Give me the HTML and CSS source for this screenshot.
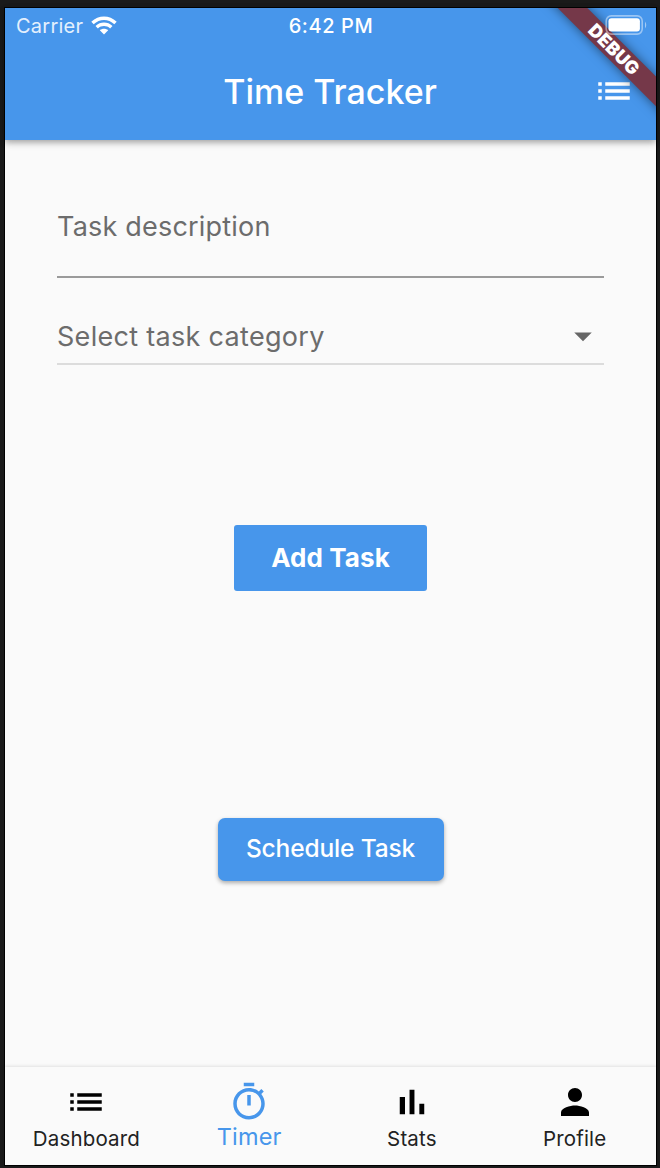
FILE: index.html
```html
<!DOCTYPE html>
<html lang="en">
<head>
<meta charset="utf-8">
<title>Time Tracker</title>
<link rel="stylesheet" href="styles.css">
</head>
<body>
<div class="phone">
  <header class="header">
    <div class="status">
      <div class="carrier"><span>Carrier</span>
        <svg class="wifi" viewBox="0 0 26 19"><path d="M0.3 5.8C7.5-1.3 18.500-1.300 25.700 5.800L23.300 8.200C17.400 2.500 8.600 2.500 2.700 8.200ZM4.500 10C9.300 5.400 16.700 5.400 21.500 10L19.100 12.400C15.600 9.200 10.400 9.200 6.900 12.400ZM8.800 14.300C11.200 12.300 14.800 12.300 17.200 14.300L13 18.600Z"/></svg>
      </div>
      <div class="clock">6:42 PM</div>
      <svg class="battery" viewBox="0 0 42 20"><rect class="shell" x="1.200" y=".9" width="36" height="18.200" rx="5"/><rect x="3.500" y="3.200" width="31.400" height="13.400" rx="3"/><path class="cap" d="M40 6.500Q42.500 10 40 13.500Z"/></svg>
    </div>
    <div class="toolbar">
      <h1 class="title">Time Tracker</h1>
      <svg class="icon" viewBox="0 0 24 24"><path d="M3 13h2v-2H3v2zm0 4h2v-2H3v2zm0-8h2V7H3v2zm4 4h14v-2H7v2zm0 4h14v-2H7v2zM7 7v2h14V7H7z"/></svg>
    </div>
    <div class="ribbon-clip"><div class="ribbon"><span>DEBUG</span></div></div>
  </header>
  <main class="content">
    <div class="field description"><span>Task description</span></div>
    <div class="field category"><span>Select task category</span>
      <svg class="icon" viewBox="0 0 24 24"><path d="M7 10l5 5 5-5z"/></svg>
    </div>
    <button class="add">Add Task</button>
    <button class="schedule">Schedule Task</button>
  </main>
  <nav class="nav">
    <div class="tab"><svg class="icon" viewBox="0 0 24 24"><path d="M3 13h2v-2H3v2zm0 4h2v-2H3v2zm0-8h2V7H3v2zm4 4h14v-2H7v2zm0 4h14v-2H7v2zM7 7v2h14V7H7z"/></svg><span class="dashboard">Dashboard</span></div>
    <div class="tab active"><svg class="icon" viewBox="0 0 24 24"><path d="M15 1H9v2h6V1zm-4 13h2V8h-2v6zm8.030-6.610l1.420-1.420c-.43-.51-.9-.99-1.410-1.410l-1.420 1.420C16.070 4.740 14.120 4 12 4c-4.970 0-9 4.030-9 9s4.020 9 9 9 9-4.030 9-9c0-2.120-.74-4.070-1.970-5.610zM12 20c-3.870 0-7-3.130-7-7s3.130-7 7-7 7 3.130 7 7-3.130 7-7 7z"/></svg><span>Timer</span></div>
    <div class="tab"><svg class="icon" viewBox="0 0 24 24"><path d="M5 9.200h3V19H5zM10.600 5h2.800v14h-2.800zm5.600 8H19v6h-2.800z"/></svg><span class="stats">Stats</span></div>
    <div class="tab"><svg class="icon" viewBox="0 0 24 24"><path d="M12 12c2.210 0 4-1.790 4-4s-1.790-4-4-4-4 1.790-4 4 1.790 4 4 4zm0 2c-2.670 0-8 1.340-8 4v2h16v-2c0-2.660-5.330-4-8-4z"/></svg><span class="profile">Profile</span></div>
  </nav>
</div>
</body>
</html>
```
FILE: styles.css
```css
* { box-sizing: border-box; }
body {
  margin: 0;
  height: 1168px;
  padding: 8px 4px 3px 5px;
  background: #1a1a1a;
  font-family: Inter, "Liberation Sans", sans-serif;
  overflow: hidden;
}
.phone {
  width: 651px;
  height: 1157px;
  display: flex;
  flex-direction: column;
  background: #fafafa;
  box-shadow: 0 0 0 1px #000;
}
.icon { width: 42px; height: 42px; fill: currentColor; display: block; flex: none; }
.header {
  position: relative;
  height: 132px;
  flex: none;
  background: #4796eb;
  color: #fff;
  box-shadow: 0 2px 6px rgba(0,0,0,.26), 0 3px 8px rgba(0,0,0,.14);
}
.status {
  position: relative;
  z-index: 2;
  height: 35px;
  display: grid;
  grid-template-columns: 1fr auto 1fr;
  align-items: center;
  padding: 0 10px 0 11px;
  font-size: 20px;
}
.carrier { display: flex; align-items: center; gap: 8px; letter-spacing: .25px; color: #e4f0fd; }
.wifi { width: 26px; height: 19px; fill: #fff; }
.clock { font-weight: 500; letter-spacing: .6px; }
.battery { width: 42px; height: 20px; justify-self: end; margin: -1px -1px 0 0; fill: #fff; }
.shell { fill: none; stroke: #fff; stroke-opacity: .45; stroke-width: 1.600; }
.cap { fill-opacity: .5; }
.toolbar {
  height: 97px;
  display: grid;
  grid-template-columns: 42px 1fr 42px;
  align-items: center;
  padding: 0 21px 0 20px;
  margin-top: -1px;
}
.title { grid-column: 2; margin: 0; padding-top: 2px; text-align: center; font-size: 34px; font-weight: 550; letter-spacing: 0; }
.ribbon-clip { position: absolute; right: 0; top: 0; width: 140px; height: 132px; overflow: hidden; }
.ribbon {
  position: absolute;
  left: -2px;
  top: 31.400px;
  width: 200px;
  height: 21.200px;
  transform: rotate(45deg);
  background: #753849;
  box-shadow: 0 0 11px rgba(0,0,0,.5);
  text-align: center;
  font-size: 18px;
  line-height: 21.200px;
  font-weight: 900;
  letter-spacing: .2px;
}
.content { flex: 1; display: flex; flex-direction: column; align-items: center; }
.field {
  width: 547px;
  display: flex;
  justify-content: space-between;
  color: #6c6c6c;
  font-size: 27px;
  line-height: 36px;
}
.description { margin-top: 69px; height: 69px; border-bottom: 2px solid #9a9a9a; letter-spacing: .2px; }
.category { margin-top: 41px; height: 46px; border-bottom: 2px solid #dcdcdc; letter-spacing: .3px; }
.category .icon { margin-top: -4px; color: #666; }
button { padding: 0 0 2px; border: 0; color: #fff; background: #4796eb; font-family: inherit; }
.add { width: 193px; height: 66px; margin-top: 160px; border-radius: 3px; font-size: 26px; font-weight: 700; letter-spacing: .1px; }
.schedule {
  width: 226px;
  height: 63px;
  margin-top: 227px;
  padding-bottom: 3px;
  border-radius: 7px;
  font-size: 24.500px;
  font-weight: 500;
  letter-spacing: -.15px;
  box-shadow: 0 2px 4px rgba(0,0,0,.32);
}
.nav {
  height: 98px;
  flex: none;
  display: grid;
  grid-template-columns: repeat(4, 1fr);
  padding-top: 14px;
  box-shadow: 0 -1px 3px rgba(0,0,0,.1);
}
.tab { display: flex; flex-direction: column; align-items: center; color: #000; font-size: 20.500px; line-height: 28px; }
.tab span { margin-top: 2px; color: #222; letter-spacing: .15px; }
.tab.active { color: #4796eb; }
.tab.active span { margin-top: 0; color: inherit; font-size: 23.500px; }
```
